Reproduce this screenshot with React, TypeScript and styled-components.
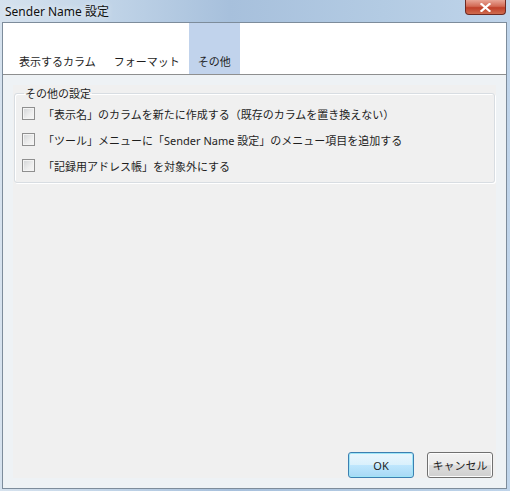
import styled, { createGlobalStyle } from 'styled-components';

const GlobalStyle = createGlobalStyle`
	html, body {
		margin: 0;
		padding: 0;
	}
	body {
		font-family: 'Noto Sans', 'Noto Sans CJK JP', sans-serif;
		color: #1e1e1e;
	}
`;

const Window = styled.div`
	width: 510px;
	height: 491px;
	box-sizing: border-box;
	display: flex;
	flex-direction: column;
	padding: 0 3px 2px 2px;
	background: linear-gradient(90deg, #d6e2ee 0%, #c2d5e8 20%, #a7c0dc 45%, #b3cbe3 75%, #bfd4ea 100%);
	position: relative;
`;

const TitleBar = styled.div`
	height: 22px;
	flex: none;
	display: flex;
	align-items: center;
	padding-left: 3px;
	font-size: 12px;
	color: #101010;
	text-shadow: 0 0 6px rgba(255, 255, 255, 0.9);
`;

const CloseButton = styled.div`
	position: absolute;
	top: 0;
	right: 4px;
	width: 41px;
	height: 15px;
	box-sizing: border-box;
	border: 1px solid #6e2a22;
	border-top: none;
	border-radius: 0 0 4px 4px;
	background: linear-gradient(180deg, #e8a596 0%, #d26a55 45%, #c0402a 55%, #cf6c4f 100%);
	display: flex;
	align-items: center;
	justify-content: center;
`;

const Client = styled.div`
	flex: 1;
	display: flex;
	flex-direction: column;
	border: 1px solid #7d8c9b;
	background: #f0f0f0;
`;

const TabStrip = styled.div`
	height: 51px;
	flex: none;
	display: flex;
	align-items: flex-end;
	padding-left: 7px;
	background: #fff;
	border-bottom: 1px solid #8e8f8f;
`;

const Tab = styled.div<{ $selected?: boolean }>`
	height: 51px;
	box-sizing: border-box;
	display: flex;
	align-items: flex-end;
	padding: 0 9px 5px;
	font-size: 11px;
	background: ${p => (p.$selected ? '#c1d3ec' : 'transparent')};
`;

const Body = styled.div`
	flex: 1;
	display: flex;
	flex-direction: column;
	padding: 10px 10px 10px;
	background: #eef2f5;
`;

const Panel = styled.div`
	flex: 1;
	display: flex;
	flex-direction: column;
	background: #f0f0f0;
`;

const Group = styled.fieldset`
	margin: 0 1px 0 1px;
	padding: 4px 0 8px 7px;
	border: 1px solid #d8dde2;
	border-radius: 3px;
	box-shadow: inset 1px 1px 0 #fff, 1px 1px 0 #fff;
	display: flex;
	flex-direction: column;
	gap: 9px;
`;

const Legend = styled.legend`
	font-size: 11px;
	padding: 0 1px;
	margin-left: 2px;
`;

const Row = styled.label`
	display: flex;
	align-items: center;
	gap: 8px;
	height: 17px;
	font-size: 11px;
`;

const Box = styled.span`
	width: 13px;
	height: 13px;
	box-sizing: border-box;
	border: 1px solid #8f8f8f;
	background: linear-gradient(135deg, #d2d4d6 0%, #eeeeee 60%, #f6f6f6 100%);
	box-shadow: inset 0 0 0 1px #f4f4f4;
	flex: none;
`;

const Footer = styled.div`
	display: flex;
	justify-content: flex-end;
	gap: 13px;
	padding: 0 3px 0 0;
`;

const Button = styled.button<{ $default?: boolean }>`
	width: 66px;
	height: 26px;
	font-family: inherit;
	font-size: 11px;
	color: #1e1e1e;
	border-radius: 3px;
	border: 1px solid ${p => (p.$default ? '#3c7fb1' : '#707070')};
	background: ${p =>
		p.$default
			? 'linear-gradient(180deg, #eaf6fd 0%, #d9f0fc 50%, #bee6fd 51%, #a7d9f5 100%)'
			: 'linear-gradient(180deg, #f2f2f2 0%, #ebebeb 50%, #dddddd 51%, #cfcfcf 100%)'};
	box-shadow: inset 0 0 0 1px ${p => (p.$default ? '#9ee5f7' : '#fcfcfc')};
	padding: 0;
`;

const Spacer = styled.div`
	flex: 1;
`;

const items = [
	'「表示名」のカラムを新たに作成する（既存のカラムを置き換えない）',
	'「ツール」メニューに「Sender Name 設定」のメニュー項目を追加する',
	'「記録用アドレス帳」を対象外にする',
];

const App = () => (
	<>
		<GlobalStyle />
		<Window>
			<TitleBar>Sender Name 設定</TitleBar>
			<CloseButton>
				<svg width="11" height="9" viewBox="0 0 11 9">
					<path d="M1.5 1 L9.5 8 M9.5 1 L1.5 8" stroke="#fff" strokeWidth="2.2" strokeLinecap="square" />
				</svg>
			</CloseButton>
			<Client>
				<TabStrip>
					<Tab>表示するカラム</Tab>
					<Tab>フォーマット</Tab>
					<Tab $selected>その他</Tab>
				</TabStrip>
				<Body>
					<Panel>
						<Group>
							<Legend>その他の設定</Legend>
							{items.map(text => (
								<Row key={text}>
									<Box />
									{text}
								</Row>
							))}
						</Group>
						<Spacer />
						<Footer>
							<Button $default>OK</Button>
							<Button>キャンセル</Button>
						</Footer>
					</Panel>
				</Body>
			</Client>
		</Window>
	</>
);

export default App;
